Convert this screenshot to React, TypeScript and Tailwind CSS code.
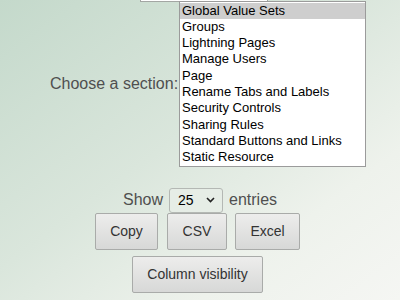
const sections = [
  "Global Value Sets",
  "Groups",
  "Lightning Pages",
  "Manage Users",
  "Page",
  "Rename Tabs and Labels",
  "Security Controls",
  "Sharing Rules",
  "Standard Buttons and Links",
  "Static Resource",
];

function Btn({ label, className }: { label: string; className: string }) {
  return (
    <button
      type="button"
      className={`flex h-[37px] items-center justify-center rounded-[2px] border border-[#a9aba9] bg-[linear-gradient(to_bottom,#ededec,#d7d8d7)] text-[14px] text-[#333] ${className}`}
    >
      {label}
    </button>
  );
}

export default function App() {
  return (
    <div
      className="h-[300px] w-[400px] overflow-hidden bg-[linear-gradient(to_bottom_right,#c4d9cb_0%,#dae6dc_45%,#eef2ec_75%,#f5f6f3_100%)]"
      style={{ fontFamily: '"Liberation Sans", Arial, sans-serif' }}
    >
      {/* bottom edge of the field above */}
      <div className="ml-[140px] h-[2px] w-[128px] border border-t-0 border-[#a3a6a3] bg-white" />

      {/* section picker */}
      <div className="-mt-[1px] flex items-center pl-[50px]">
        <label className="w-[129px] text-[16px] text-[#4f4f4f]">Choose a section:</label>
        <div className="w-[187px] border border-[#9b9b9b] bg-white py-[0.5px]">
          {sections.map((s, i) => (
            <div
              key={s}
              className={`h-[16.3px] pl-[2px] text-[13px] leading-[16px] text-black ${
                i === 0 ? "bg-[#cecece]" : ""
              }`}
            >
              {s}
            </div>
          ))}
        </div>
      </div>

      {/* page length */}
      <div className="mt-[21px] flex items-center justify-center text-[16px] text-[#4f4f4f]">
        <span>Show</span>
        <div className="mx-[6px] flex h-[25px] w-[54px] items-center justify-between rounded-[3px] border border-[#b4b8b4] bg-[#e6ede6] pl-[8px] pr-[7px] text-[14px] text-black">
          <span>25</span>
          <svg width="9" height="6" viewBox="0 0 9 6" fill="none">
            <path d="M1 1l3.5 3.5L8 1" stroke="#222" strokeWidth="1.6" />
          </svg>
        </div>
        <span>entries</span>
      </div>

      {/* export buttons */}
      <div className="flex justify-center pr-[5px]">
        <Btn label="Copy" className="w-[63px]" />
        <Btn label="CSV" className="ml-[9px] w-[60px]" />
        <Btn label="Excel" className="ml-[8px] w-[65px]" />
      </div>
      <div className="mt-[6px] flex justify-center pr-[5px]">
        <Btn label="Column visibility" className="w-[131px]" />
      </div>
    </div>
  );
}
